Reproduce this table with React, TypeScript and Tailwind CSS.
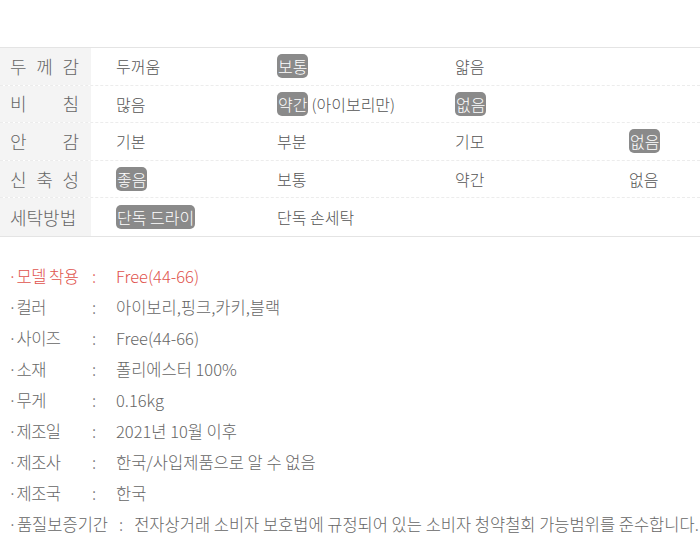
const FONT = "font-['Noto_Sans_CJK_KR','Noto_Sans',sans-serif]";

type Cell = { text: string; badge?: boolean; extra?: string };

const rows: { label: string[]; cells: (Cell | null)[] }[] = [
  {
    label: ["두", "께", "감"],
    cells: [{ text: "두꺼움" }, { text: "보통", badge: true }, { text: "얇음" }, null],
  },
  {
    label: ["비", "침"],
    cells: [
      { text: "많음" },
      { text: "약간", badge: true, extra: "(아이보리만)" },
      { text: "없음", badge: true },
      null,
    ],
  },
  {
    label: ["안", "감"],
    cells: [{ text: "기본" }, { text: "부분" }, { text: "기모" }, { text: "없음", badge: true }],
  },
  {
    label: ["신", "축", "성"],
    cells: [{ text: "좋음", badge: true }, { text: "보통" }, { text: "약간" }, { text: "없음" }],
  },
  {
    label: ["세탁방법"],
    cells: [{ text: "단독 드라이", badge: true }, { text: "단독 손세탁" }, null, null],
  },
];

const info = [
  { k: "모델 착용", v: "Free(44-66)", red: true },
  { k: "컬러", v: "아이보리,핑크,카키,블랙" },
  { k: "사이즈", v: "Free(44-66)" },
  { k: "소재", v: "폴리에스터 100%" },
  { k: "무게", v: "0.16kg" },
  { k: "제조일", v: "2021년 10월 이후" },
  { k: "제조사", v: "한국/사입제품으로 알 수 없음" },
  { k: "제조국", v: "한국" },
];

function ValueCell({ cell }: { cell: Cell | null }) {
  return (
    <div className="flex items-center pl-[25px] text-[16px] text-[#555]">
      {cell &&
        (cell.badge ? (
          <>
            <span className="rounded-[5px] bg-[#8a8a8a] px-[1px] leading-[24px] text-white">
              {cell.text}
            </span>
            {cell.extra && <span className="ml-[3px]">{cell.extra}</span>}
          </>
        ) : (
          <span>{cell.text}</span>
        ))}
    </div>
  );
}

export default function App() {
  return (
    <div className={`${FONT} h-[554px] w-[700px] bg-white pt-[47px] font-light`}>
      <div className="border-y border-[#e4e4e4]">
        {rows.map((r, i) => (
          <div
            key={i}
            className={`grid h-[37.6px] grid-cols-[91px_161px_178px_174px_1fr] ${
              i < rows.length - 1 ? "border-b border-dashed border-[#ececec]" : ""
            }`}
          >
            <div className="flex items-center bg-[#f4f4f4] pl-[10px] pr-[12px]">
              <div
                className={`flex w-full text-[18px] text-[#666] ${
                  r.label.length > 1 ? "justify-between" : ""
                }`}
              >
                {r.label.map((c, j) => (
                  <span key={j}>{c}</span>
                ))}
              </div>
            </div>
            {r.cells.map((c, j) => (
              <ValueCell key={j} cell={c} />
            ))}
          </div>
        ))}
      </div>

      <div className="mt-[24px] flex flex-col pl-[8px] text-[16.5px] text-[#666]">
        {info.map((it, i) => (
          <div
            key={i}
            className={`flex h-[31px] items-center ${it.red ? "text-[#e0534d]" : ""}`}
          >
            <span className="w-[84px] tracking-[-0.5px]">·{it.k}</span>
            <span className="w-[24px]">:</span>
            <span>{it.v}</span>
          </div>
        ))}
        <div className="flex h-[31px] items-center whitespace-nowrap">
          <span>·품질보증기간</span>
          <span className="mx-[11px]">:</span>
          <span>전자상거래 소비자 보호법에 규정되어 있는 소비자 청약철회 가능범위를 준수합니다.</span>
        </div>
      </div>
    </div>
  );
}
